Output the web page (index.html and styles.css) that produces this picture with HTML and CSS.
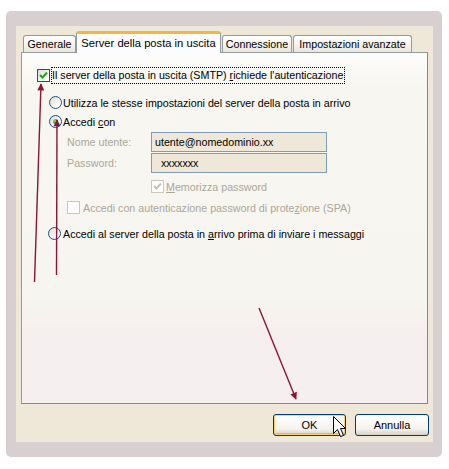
FILE: index.html
```html
<!DOCTYPE html>
<html lang="it">
<head>
    <meta charset="UTF-8">
    <meta name="viewport" content="width=device-width, initial-scale=1.0">
    <title>Server della posta in uscita</title>
    <link rel="stylesheet" href="styles.css">
</head>
<body>
    <div class="frame">
        <div class="dialog">
            <div class="tabs">
                <div class="tab first">Generale</div>
                <div class="tab active">Server della posta in uscita</div>
                <div class="tab conn">Connessione</div>
                <div class="tab adv">Impostazioni avanzate</div>
            </div>
            <div class="panel">
                <div class="row auth">
                    <span class="check"><svg width="11" height="11" viewBox="0 0 11 11"><path d="M2 5 L4.5 7.5 L9 2.5" fill="none" stroke="#21a121" stroke-width="2"/></svg></span>
                    <span class="focus">Il server della posta in uscita (SMTP) <u>r</u>ichiede l'autenticazione</span>
                </div>
                <div class="row opt same">
                    <span class="radio"></span>
                    <span class="lbl">Utilizza le stesse impostazioni del server della posta in arrivo</span>
                </div>
                <div class="row opt">
                    <span class="radio on"></span>
                    <span class="lbl">Accedi <u>c</u>on</span>
                </div>
                <div class="field user">
                    <span class="name">Nome utente:</span>
                    <span class="input">utente@nomedominio.xx</span>
                </div>
                <div class="field">
                    <span class="name">Password:</span>
                    <span class="input pwd">xxxxxxx</span>
                </div>
                <div class="row remember">
                    <span class="check off"><svg width="11" height="11" viewBox="0 0 11 11"><path d="M2 5 L4.5 7.5 L9 2.5" fill="none" stroke="#c7c5b2" stroke-width="2"/></svg></span>
                    <span class="lbl gray"><u>M</u>emorizza password</span>
                </div>
                <div class="row spa">
                    <span class="check off"></span>
                    <span class="lbl gray">Accedi con autenticazione password di prote<u>z</u>ione (SPA)</span>
                </div>
                <div class="row opt before">
                    <span class="radio"></span>
                    <span class="lbl">Accedi al server della posta in <u>a</u>rrivo prima di inviare i messaggi</span>
                </div>
            </div>
            <div class="buttons">
                <button class="btn default">OK</button>
                <button class="btn">Annulla</button>
            </div>
        </div>
    </div>

    <!-- frecce e puntatore sopra il dialogo -->
    <svg class="marks" width="449" height="469" viewBox="0 0 449 469">
        <defs>
            <marker id="head" viewBox="0 0 10 10" refX="9" refY="5" markerWidth="8" markerHeight="7" orient="auto" markerUnits="userSpaceOnUse">
                <path d="M0 0 L10 5 L0 10 Z" fill="#8a1538"/>
            </marker>
        </defs>
        <g stroke="#8a1538" stroke-width="1.4" fill="none" marker-end="url(#head)">
            <line x1="34.5" y1="282" x2="41" y2="84"/>
            <line x1="56.5" y1="275" x2="57" y2="120"/>
            <line x1="259" y1="308" x2="296" y2="399"/>
        </g>
        <path d="M333.5 416.5 V433.5 L337.5 429.5 L340.5 436.5 L343.5 435.5 L340.5 428.5 L345.5 428.5 Z" fill="#fff" stroke="#000" stroke-width="1" stroke-linejoin="miter"/>
    </svg>
</body>
</html>
```

FILE: styles.css
```css
body {
    margin: 0;
    background: #fff;
    font-family: "Liberation Sans", Arial, sans-serif;
    font-size: 10.7px;
    color: #000;
    position: relative;
    width: 449px;
    height: 469px;
    overflow: hidden;
}
.frame {
    margin: 11px 0 0 6px;
    width: 417px;
    height: 416px;
    padding: 15px 9px 15px 10px;
    background: #d8d0d0;
    border-radius: 5px;
}
.dialog {
    height: 416px;
    background: #efe8d8;
    padding: 5px 5px 0 5px;
    box-sizing: border-box;
}
.tabs {
    display: flex;
    align-items: flex-end;
    height: 21px;
    padding-left: 2px;
    position: relative;
    z-index: 2;
}
.tab {
    height: 17px;
    box-sizing: border-box;
    border: 1px solid #919b9c;
    border-bottom: none;
    border-radius: 3px 3px 0 0;
    background: linear-gradient(#fff, #f3f2ec 60%, #e9e7dd);
    line-height: 16px;
    text-align: center;
    white-space: nowrap;
}
.tab.first {
    width: 53px;
}
.tab.active {
    width: 145px;
    height: 22px;
    margin-bottom: -1px;
    background: #fcfcfe;
    border-top: 3px solid #f6b543;
    line-height: 18px;
    font-size: 11.2px;
}
.tab.conn {
    width: 70px;
    margin-left: 1px;
}
.tab.adv {
    width: 119px;
    margin-left: 1px;
}
.panel {
    position: relative;
    height: 352px;
    box-sizing: border-box;
    border: 1px solid #919b9c;
    border-right-color: #7f8790;
    border-bottom-color: #7f8790;
    background: linear-gradient(#fcfcfb 0, #f7f6f1 10%, #f6f5ef 70%, #f5eeee 82%, #f6efef 100%);
    padding: 13px 0 0 15px;
}
.row {
    display: flex;
    align-items: center;
    height: 19px;
    white-space: nowrap;
}
.check {
    width: 13px;
    height: 13px;
    box-sizing: border-box;
    border: 1px solid #1c5180;
    background: linear-gradient(135deg, #dcdbd5, #fff 80%);
    display: flex;
    align-items: center;
    justify-content: center;
}
.check.off {
    border-color: #cac8bb;
    background: #fff;
}
.radio {
    width: 13px;
    height: 13px;
    box-sizing: border-box;
    border: 1px solid #1c5180;
    border-radius: 50%;
    background: linear-gradient(135deg, #dcdbd5, #fff 80%);
    position: relative;
}
.radio.on::after {
    content: "";
    position: absolute;
    left: 3px;
    top: 3px;
    width: 5px;
    height: 5px;
    border-radius: 50%;
    background: radial-gradient(circle at 35% 35%, #7be47b, #21a121 70%);
}
.focus {
    margin-left: 1px;
    border: 1px dotted #000;
    height: 17px;
    box-sizing: border-box;
    line-height: 15px;
    padding-right: 1px;
}
.opt {
    padding-left: 12px;
}
.opt .lbl {
    margin-left: 1px;
}
.same {
    margin-top: 8px;
}
.field {
    display: flex;
    align-items: center;
    height: 20px;
    margin-top: 1px;
    padding-left: 30px;
}
.name {
    width: 84px;
    color: #aca899;
}
.input {
    width: 176px;
    height: 20px;
    box-sizing: border-box;
    border: 1px solid #7f9db9;
    background: #efe8d8;
    line-height: 18px;
    padding-left: 3px;
}
.input.pwd {
    padding-left: 9px;
}
.remember {
    margin-top: 4px;
    padding-left: 114px;
}
.remember .lbl {
    margin-left: 2px;
}
.spa {
    margin-top: 2px;
    padding-left: 30px;
}
.spa .lbl {
    margin-left: 3px;
}
.gray {
    color: #aca899;
}
.before {
    margin-top: 7px;
    padding-left: 11px;
}
.before .lbl {
    margin-left: 2px;
}
.buttons {
    display: flex;
    justify-content: flex-end;
    gap: 9px;
    margin-top: 10px;
    margin-right: -1px;
}
.btn {
    width: 73px;
    height: 22px;
    border: 1px solid #003c74;
    border-radius: 3px;
    background: linear-gradient(#fff, #f4f3ee 70%, #d6d0c5);
    font-family: "Liberation Sans", Arial, sans-serif;
    font-size: 11px;
    color: #000;
    padding: 0;
    margin: 0;
}
.btn.default {
    box-shadow: inset 0 0 0 1px #fbd36f, inset 0 -2px 0 0 #f5b544;
}
.btn + .btn {
    width: 74px;
}
.marks {
    position: absolute;
    left: 0;
    top: 0;
    pointer-events: none;
}
```
